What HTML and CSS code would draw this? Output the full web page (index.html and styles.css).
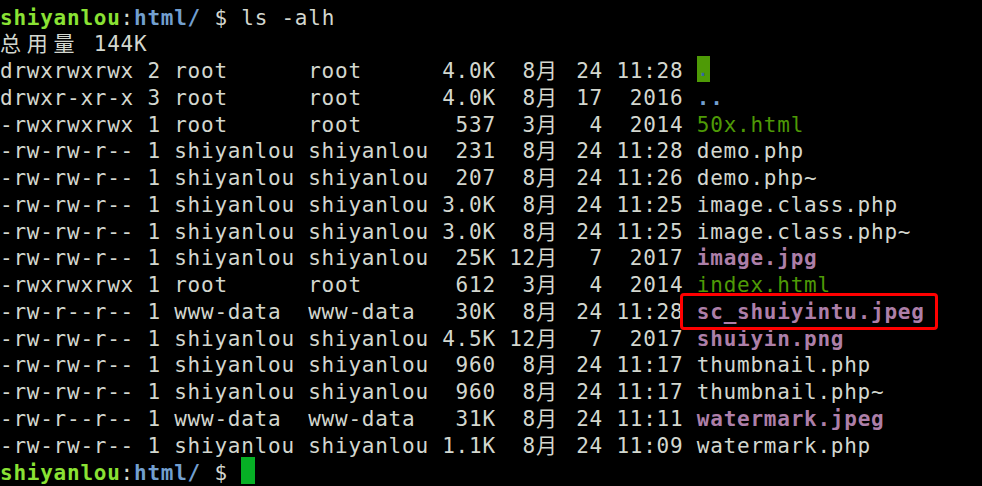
FILE: index.html
```html
<!DOCTYPE html>
<html lang="zh-CN">
<head>
    <meta charset="UTF-8">
    <meta name="viewport" content="width=device-width, initial-scale=1.0">
    <title>ls -alh</title>
    <link rel="stylesheet" href="styles.css">
</head>
<body>
<pre class="term"><b class="user">shiyanlou</b>:<b class="path">html/</b> $ ls -alh
<span class="w">总</span><span class="w">用</span><span class="w">量</span> 144K
drwxrwxrwx 2 root      root      4.0K  8<span class="w">月</span> 24 11:28 <span class="sticky">.</span>
drwxr-xr-x 3 root      root      4.0K  8<span class="w">月</span> 17  2016 <b class="dir">..</b>
-rwxrwxrwx 1 root      root       537  3<span class="w">月</span>  4  2014 <span class="exe">50x.html</span>
-rw-rw-r-- 1 shiyanlou shiyanlou  231  8<span class="w">月</span> 24 11:28 demo.php
-rw-rw-r-- 1 shiyanlou shiyanlou  207  8<span class="w">月</span> 24 11:26 demo.php~
-rw-rw-r-- 1 shiyanlou shiyanlou 3.0K  8<span class="w">月</span> 24 11:25 image.class.php
-rw-rw-r-- 1 shiyanlou shiyanlou 3.0K  8<span class="w">月</span> 24 11:25 image.class.php~
-rw-rw-r-- 1 shiyanlou shiyanlou  25K 12<span class="w">月</span>  7  2017 <b class="img">image.jpg</b>
-rwxrwxrwx 1 root      root       612  3<span class="w">月</span>  4  2014 <span class="exe">index.html</span>
-rw-r--r-- 1 www-data  www-data   30K  8<span class="w">月</span> 24 11:28 <b class="img marked">sc_shuiyintu.jpeg</b>
-rw-rw-r-- 1 shiyanlou shiyanlou 4.5K 12<span class="w">月</span>  7  2017 <b class="img">shuiyin.png</b>
-rw-rw-r-- 1 shiyanlou shiyanlou  960  8<span class="w">月</span> 24 11:17 thumbnail.php
-rw-rw-r-- 1 shiyanlou shiyanlou  960  8<span class="w">月</span> 24 11:17 thumbnail.php~
-rw-r--r-- 1 www-data  www-data   31K  8<span class="w">月</span> 24 11:11 <b class="img">watermark.jpeg</b>
-rw-rw-r-- 1 shiyanlou shiyanlou 1.1K  8<span class="w">月</span> 24 11:09 watermark.php
<b class="user">shiyanlou</b>:<b class="path">html/</b> $ <span class="cursor"></span></pre>
</body>
</html>
```

FILE: styles.css
```css
body {
    margin: 0;
    background: #000;
}
.term {
    margin: 0;
    padding: 4.5px 0 0 0;
    font-family: "DejaVu Sans Mono", "Noto Sans CJK SC", monospace;
    font-size: 21px;
    line-height: 26.76px;
    letter-spacing: 0.757px;
    color: #d3d7cf;
}
.w {
    display: inline-block;
    width: 26.8px;
    letter-spacing: 0;
}
.user { color: #8ae234; }
.path { color: #729fcf; }
.dir { color: #729fcf; }
.exe { color: #4e9a06; }
.img { color: #ad7fa8; }
.sticky {
    display: inline-block;
    vertical-align: top;
    height: 26.76px;
    margin-top: -2.5px;
    background: #4e9a06;
    color: #3465a4;
}
.marked { position: relative; }
.marked::after {
    content: "";
    position: absolute;
    left: -17px;
    right: -13px;
    top: -6.5px;
    bottom: -6.5px;
    border: 3px solid #ff0000;
    border-radius: 4px;
}
.cursor {
    display: inline-block;
    vertical-align: top;
    width: 13.4px;
    height: 27px;
    margin-top: -3px;
    background: #06b025;
}
```
